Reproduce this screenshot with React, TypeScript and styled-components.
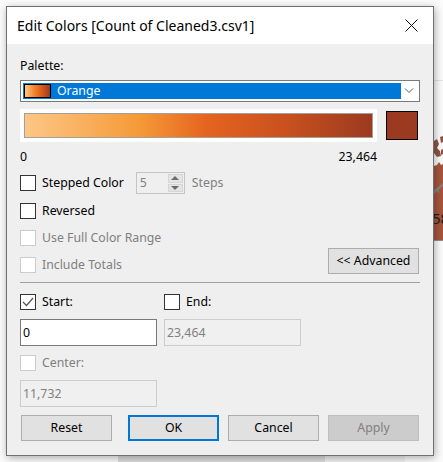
import React from 'react';
import styled, { createGlobalStyle } from 'styled-components';

const GlobalStyle = createGlobalStyle`
  html, body {
    margin: 0;
    padding: 0;
    background: #fbfbfb;
  }
  body {
    font-family: "Noto Sans", "Open Sans", sans-serif;
    overflow: hidden;
  }
`;

const Page = styled.div`
  position: relative;
  width: 443px;
  height: 462px;
  padding: 6px 0 0 6px;
  box-sizing: border-box;
  overflow: hidden;
`;

const Backdrop = styled.svg`
  position: absolute;
  left: 0;
  top: 0;
`;

const MapValue = styled.span`
  position: absolute;
  left: 432px;
  top: 208px;
  font-size: 15px;
  line-height: 20px;
  color: #1c1c1c;
`;

const Dialog = styled.div`
  position: relative;
  width: 428px;
  height: 450px;
  box-sizing: border-box;
  border: 1px solid #6f6f6f;
  background: #efefef;
  box-shadow: 1px 2px 8px rgba(0, 0, 0, 0.32);
  display: flex;
  flex-direction: column;
  color: #000;
  font-size: 12.3px;
  line-height: 16px;
`;

const TitleBar = styled.div`
  height: 37px;
  flex: none;
  background: #fff;
  display: flex;
  align-items: center;
  justify-content: space-between;
  padding: 0 15px 0 10px;
  font-size: 14px;
`;

const Body = styled.div`
  flex: 1;
  padding: 14px 13px 0 13px;
  display: flex;
  flex-direction: column;
`;

const PaletteLabel = styled.div`
  height: 16px;
  margin-bottom: 6px;
`;

const Select = styled.div`
  height: 22px;
  box-sizing: border-box;
  border: 1px solid #7a7a7a;
  background: #fff;
  padding: 2px;
  display: flex;
  align-items: stretch;
`;

const SelectValue = styled.div`
  flex: 1;
  background: #0078d7;
  color: #fff;
  display: flex;
  align-items: center;
  padding: 0 1px;
  gap: 6px;
`;

const MiniRamp = styled.div`
  width: 27px;
  height: 14px;
  box-sizing: border-box;
  border: 1px solid #000;
  background: linear-gradient(to right, #fdc785, #f0802a 40%, #e2631e 60%, #9b3a20);
`;

const ChevronBox = styled.div`
  width: 16px;
  display: flex;
  align-items: center;
  justify-content: center;
`;

const RampRow = styled.div`
  margin-top: 7px;
  display: flex;
  align-items: center;
  justify-content: space-between;
  padding-right: 2px;
`;

const RampFrame = styled.div`
  width: 357px;
  height: 33px;
  box-sizing: border-box;
  background: #fff;
  padding: 4px;
`;

const Ramp = styled.div`
  height: 25px;
  box-sizing: border-box;
  border: 1px solid #a39f99;
  background: linear-gradient(to right, #fdc785 0%, #f59a38 33%, #e5651f 52%, #c9511f 75%, #9b3a20 100%);
`;

const EndSwatch = styled.div`
  width: 32px;
  height: 29px;
  box-sizing: border-box;
  border: 1px solid #000;
  background: #9b3a20;
`;

const RangeLabels = styled.div`
  width: 357px;
  display: flex;
  justify-content: space-between;
  margin-top: 7px;
  height: 16px;
`;

const OptionRow = styled.div<{ $top: number }>`
  display: flex;
  align-items: center;
  height: 22px;
  margin-top: ${p => p.$top}px;
`;

const Box = styled.div<{ $disabled?: boolean }>`
  width: 16px;
  height: 16px;
  flex: none;
  box-sizing: border-box;
  border: 1px solid ${p => (p.$disabled ? '#cccccc' : '#333333')};
  background: #fff;
  display: flex;
  align-items: center;
  justify-content: center;
`;

const CheckLabel = styled.span<{ $disabled?: boolean }>`
  margin-left: 6px;
  color: ${p => (p.$disabled ? '#808080' : '#000')};
`;

const Spinner = styled.div`
  width: 49px;
  height: 22px;
  margin-left: 12px;
  box-sizing: border-box;
  border: 1px solid #c4c4c4;
  display: flex;
  align-items: center;
  justify-content: space-between;
  padding-left: 3px;
  color: #808080;
`;

const SpinArrows = styled.div`
  width: 15px;
  height: 18px;
  margin-right: 1px;
  display: flex;
  flex-direction: column;
  gap: 1px;
`;

const SpinButton = styled.div`
  flex: 1;
  background: #e4e4e4;
  border: 1px solid #d6d6d6;
  box-sizing: border-box;
  display: flex;
  align-items: center;
  justify-content: center;
`;

const StepsLabel = styled.span`
  margin-left: 7px;
  color: #808080;
`;

const LowerOptions = styled.div`
  display: flex;
  justify-content: space-between;
  align-items: flex-end;
  padding-right: 1px;
`;

const Button = styled.div<{ $primary?: boolean; $disabled?: boolean }>`
  width: 91px;
  height: 26px;
  flex: none;
  box-sizing: border-box;
  display: flex;
  align-items: center;
  justify-content: center;
  background: ${p => (p.$disabled ? '#cccccc' : '#e1e1e1')};
  color: ${p => (p.$disabled ? '#808080' : '#000')};
  border: ${p =>
    p.$primary ? '2px solid #0078d7' : `1px solid ${p.$disabled ? '#bfbfbf' : '#adadad'}`};
`;

const AdvancedButton = styled(Button)`
  margin-bottom: 2px;
`;

const ResetButton = styled(Button)`
  margin-right: 7px;
`;

const Separator = styled.div`
  height: 1px;
  background: #a0a0a0;
  margin-top: 6px;
`;

const BoundsGrid = styled.div`
  display: grid;
  grid-template-columns: 137px 137px;
  column-gap: 7px;
  margin-top: 8px;
`;

const BoundCheck = styled.div`
  display: flex;
  align-items: center;
  height: 22px;
`;

const Field = styled.div<{ $disabled?: boolean }>`
  height: 27px;
  margin-top: 6px;
  box-sizing: border-box;
  padding: 0 2px;
  display: flex;
  align-items: center;
  border: 1px solid ${p => (p.$disabled ? '#cccccc' : '#7a7a7a')};
  background: ${p => (p.$disabled ? '#f0f0f0' : '#fff')};
  color: ${p => (p.$disabled ? '#808080' : '#000')};
`;

const CenterCheck = styled(BoundCheck)`
  margin-top: 6px;
`;

const CenterField = styled(Field)`
  width: 137px;
`;

const ButtonRow = styled.div`
  display: flex;
  gap: 9px;
  margin-top: 8px;
  padding: 0 1px;
`;

const App: React.FC = () => {
  return (
    <Page>
      <GlobalStyle />
      <Backdrop width={443} height={462}>
        <rect x="434" y="80" width="9" height="1" fill="#e3e3e3" />
        <rect x="434" y="170" width="9" height="70" fill="#a5553d" />
        <path d="M434 141l3-2 2 5-2 4 3 3 1 5-4 1-3-4zM440 137l3-1v6l-2 1zM441 150l2-1v5l-2 1z" fill="#8f5444" />
        <path d="M434 166l3-1 2-3 2 3 2-1v8h-9z" fill="#a5553d" />
        <path d="M434 190l4-3 5-4v3l-4 3v5l-2-3-3 3z" fill="#8a8078" />
        <rect x="434" y="240" width="9" height="1" fill="#8f8f8f" />
        <rect x="118" y="456" width="207" height="6" fill="#dcdcdc" />
        <rect x="325" y="456" width="80" height="6" fill="#f0f0f0" />
      </Backdrop>
      <MapValue>58</MapValue>
      <Dialog>
        <TitleBar>
          Edit Colors [Count of Cleaned3.csv1]
          <svg width="13" height="13" viewBox="0 0 13 13">
            <path d="M.5.5l12 12M12.5.5l-12 12" stroke="#111" strokeWidth="1" fill="none" />
          </svg>
        </TitleBar>
        <Body>
          <PaletteLabel>Palette:</PaletteLabel>
          <Select>
            <SelectValue>
              <MiniRamp />
              Orange
            </SelectValue>
            <ChevronBox>
              <svg width="10" height="6" viewBox="0 0 10 6">
                <path d="M1 .5l4 4 4-4" stroke="#555" strokeWidth="1" fill="none" />
              </svg>
            </ChevronBox>
          </Select>
          <RampRow>
            <RampFrame>
              <Ramp />
            </RampFrame>
            <EndSwatch />
          </RampRow>
          <RangeLabels>
            <span>0</span>
            <span>23,464</span>
          </RangeLabels>
          <OptionRow $top={7}>
            <Box />
            <CheckLabel>Stepped Color</CheckLabel>
            <Spinner>
              5
              <SpinArrows>
                <SpinButton>
                  <svg width="8" height="4" viewBox="0 0 8 4">
                    <path d="M4 0l4 4H0z" fill="#6d6d6d" />
                  </svg>
                </SpinButton>
                <SpinButton>
                  <svg width="8" height="4" viewBox="0 0 8 4">
                    <path d="M4 4L0 0h8z" fill="#6d6d6d" />
                  </svg>
                </SpinButton>
              </SpinArrows>
            </Spinner>
            <StepsLabel>Steps</StepsLabel>
          </OptionRow>
          <OptionRow $top={6}>
            <Box />
            <CheckLabel>Reversed</CheckLabel>
          </OptionRow>
          <LowerOptions>
            <div>
              <OptionRow $top={5}>
                <Box $disabled />
                <CheckLabel $disabled>Use Full Color Range</CheckLabel>
              </OptionRow>
              <OptionRow $top={5}>
                <Box $disabled />
                <CheckLabel $disabled>Include Totals</CheckLabel>
              </OptionRow>
            </div>
            <AdvancedButton>&lt;&lt; Advanced</AdvancedButton>
          </LowerOptions>
          <Separator />
          <BoundsGrid>
            <BoundCheck>
              <Box>
                <svg width="12" height="10" viewBox="0 0 12 10">
                  <path d="M1 5l3.5 3.5L11 1" stroke="#555" strokeWidth="1.2" fill="none" />
                </svg>
              </Box>
              <CheckLabel>Start:</CheckLabel>
            </BoundCheck>
            <BoundCheck>
              <Box />
              <CheckLabel>End:</CheckLabel>
            </BoundCheck>
            <Field>0</Field>
            <Field $disabled>23,464</Field>
          </BoundsGrid>
          <CenterCheck>
            <Box $disabled />
            <CheckLabel $disabled>Center:</CheckLabel>
          </CenterCheck>
          <CenterField $disabled>11,732</CenterField>
          <ButtonRow>
            <ResetButton>Reset</ResetButton>
            <Button $primary>OK</Button>
            <Button>Cancel</Button>
            <Button $disabled>Apply</Button>
          </ButtonRow>
        </Body>
      </Dialog>
    </Page>
  );
};

export default App;
